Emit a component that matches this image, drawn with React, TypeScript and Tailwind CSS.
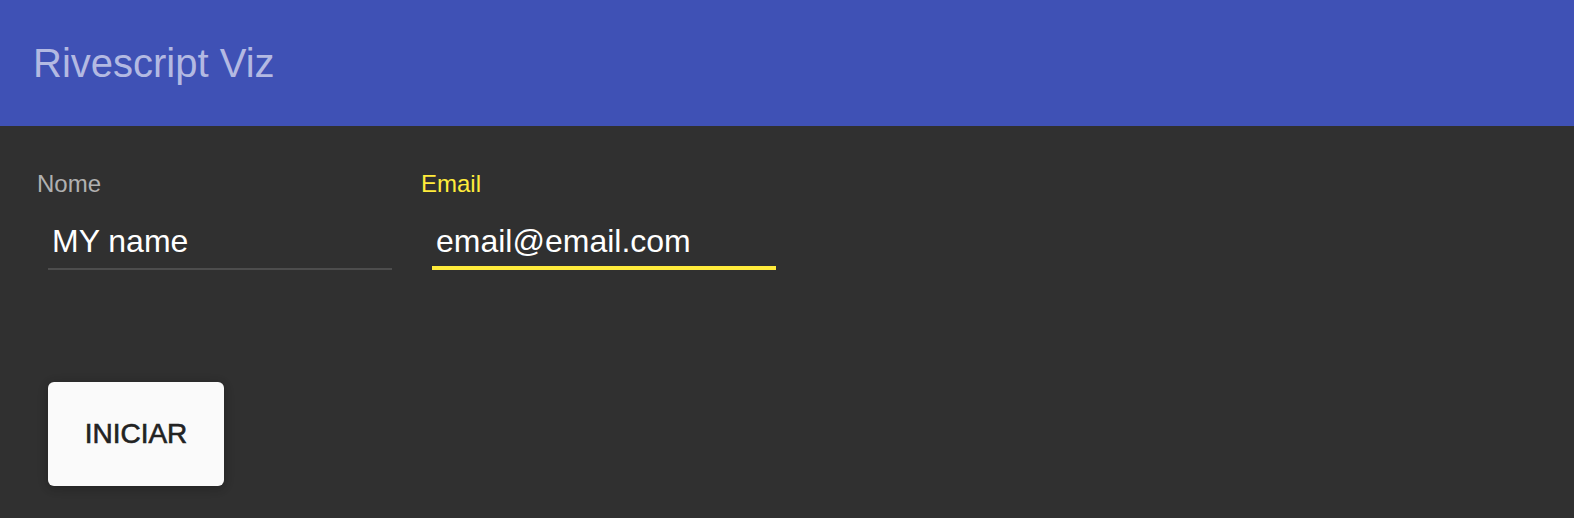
import React from "react";

const font = "font-['Liberation_Sans','Helvetica',Arial,sans-serif]";

function Field({
  label,
  value,
  active,
}: {
  label: string;
  value: string;
  active?: boolean;
}) {
  return (
    <div className="flex flex-col w-[344px]">
      <label
        className={`-ml-[11px] text-[24px] leading-none ${
          active ? "text-[#ffeb3b]" : "text-[#b0b0b0]"
        }`}
      >
        {label}
      </label>
      <div className="mt-[29px] pl-[4px] text-[32px] leading-none h-[32px] text-white whitespace-nowrap">
        {value}
      </div>
      {active ? (
        <div className="mt-[9px] h-[4px] bg-[#ffeb3b]" />
      ) : (
        <div className="mt-[11px] h-[2px] bg-[#4d4d4d]" />
      )}
    </div>
  );
}

export default function App() {
  return (
    <div className={`min-h-screen flex flex-col ${font}`}>
      {/* App bar */}
      <header className="h-[126px] shrink-0 bg-[#3f51b5] flex items-center pl-[33px]">
        <h1 className="text-[40px] leading-none text-[#b3b9e2] font-normal">
          Rivescript Viz
        </h1>
      </header>

      {/* Form */}
      <main className="flex-1 bg-[#303030] pl-[48px] pt-[46px]">
        <div className="flex gap-[40px]">
          <Field label="Nome" value="MY name" />
          <Field label="Email" value="email@email.com" active />
        </div>

        <button className="mt-[112px] w-[176px] h-[104px] rounded-[6px] bg-[#fafafa] text-[#222222] text-[28px] leading-none [-webkit-text-stroke:0.6px_#222222] shadow-[0_2px_12px_rgba(0,0,0,0.14),0_2px_8px_rgba(0,0,0,0.14)]">
          INICIAR
        </button>
      </main>
    </div>
  );
}
